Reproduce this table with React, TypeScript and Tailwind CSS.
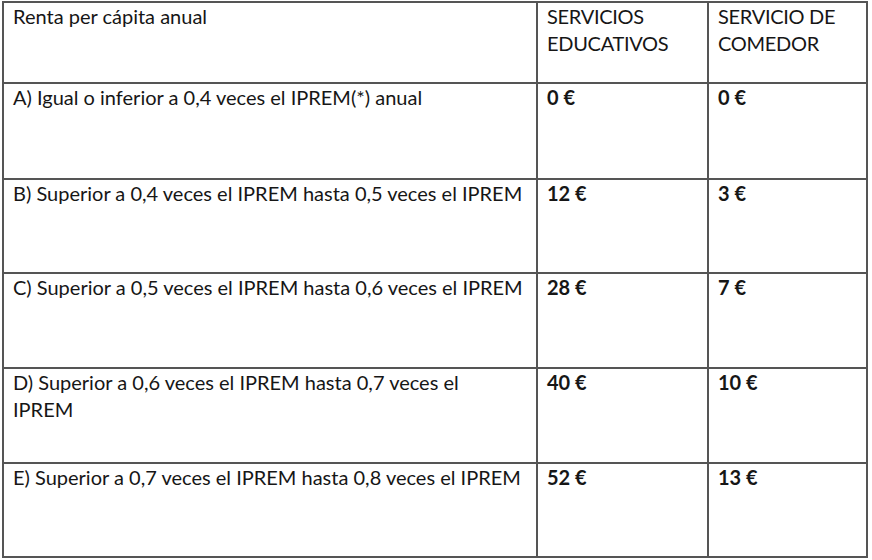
export default function App() {
  const rows = [
    { label: "A) Igual o inferior a 0,4 veces el IPREM(*) anual", edu: "0 €", com: "0 €", h: "h-[96px]" },
    { label: "B) Superior a 0,4 veces el IPREM hasta 0,5 veces el IPREM", edu: "12 €", com: "3 €", h: "h-[94px]" },
    { label: "C) Superior a 0,5 veces el IPREM hasta 0,6 veces el IPREM", edu: "28 €", com: "7 €", h: "h-[95px]" },
    { label: "D) Superior a 0,6 veces el IPREM hasta 0,7 veces el\nIPREM", edu: "40 €", com: "10 €", h: "h-[95px]" },
    { label: "E) Superior a 0,7 veces el IPREM hasta 0,8 veces el IPREM", edu: "52 €", com: "13 €", h: "h-[94px]" },
  ];

  const cell = "border-2 border-[#555] align-top pl-[9px] pr-2 pt-0 leading-[27px]";

  return (
    <div className="w-[872px] h-[560px] bg-white pl-[2px] pt-[1px] text-[#161616] text-[20px]" style={{ fontFamily: "Lato, 'Open Sans', sans-serif" }}>
      <table className="table-fixed border-collapse w-[864px]">
        <colgroup>
          <col className="w-[534px]" />
          <col className="w-[171px]" />
          <col className="w-[159px]" />
        </colgroup>
        <tbody>
          <tr className="h-[81px]">
            <td className={cell}>Renta per cápita anual</td>
            <td className={`${cell} tracking-[-0.3px]`}>SERVICIOS<br />EDUCATIVOS</td>
            <td className={`${cell} tracking-[-0.3px]`}>SERVICIO DE<br />COMEDOR</td>
          </tr>
          {rows.map((r) => (
            <tr key={r.label} className={r.h}>
              <td className={`${cell} whitespace-pre-line`}>{r.label}</td>
              <td className={`${cell} font-bold`}>{r.edu}</td>
              <td className={`${cell} font-bold`}>{r.com}</td>
            </tr>
          ))}
        </tbody>
      </table>
    </div>
  );
}
